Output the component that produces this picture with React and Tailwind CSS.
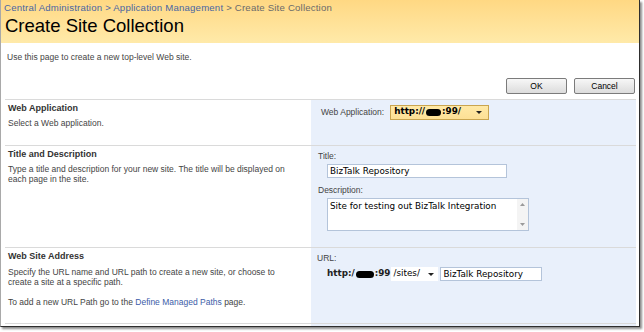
import React from "react";

const sans = "font-['Liberation_Sans',Arial,sans-serif]";
const verd = "font-['DejaVu_Sans',Verdana,sans-serif]";

// black blob that hides the server name
const Blob = ({ w }) => (
  <span className={`inline-block h-[7px] bg-black rounded-full align-middle mx-[1px] ${w}`} />
);

const Arrow = () => (
  <svg width="6" height="3" viewBox="0 0 6 3" className="shrink-0">
    <path d="M0 0h6L3 3z" fill="#222" />
  </svg>
);

const Input = ({ value, className }) => (
  <div
    className={`h-[14px] bg-white border border-[#b4c4da] flex items-center px-[2px] text-[8.8px] text-black leading-none ${verd} ${className}`}
  >
    {value}
  </div>
);

const Section = ({ title, children, right, className }) => (
  <div className={`flex border-t border-[#dadada] ${className}`}>
    <div className="w-[306px] shrink-0 pl-[3px] pr-[14px] pt-[3px]">
      <div className="text-[9px] leading-[11px] font-bold text-[#333]">{title}</div>
      {children}
    </div>
    <div className="flex-1 bg-[#e9f0fb] pt-[5px]">{right}</div>
  </div>
);

export default function App() {
  return (
    <div className={`w-[644px] h-[332px] bg-white overflow-hidden ${sans}`}>
      <div className="w-[640px] h-[327px] border-l border-l-[#a9a9a9] border-r border-r-[#2e2e2e] border-b border-b-[#2e2e2e] shadow-[2px_2px_2px_rgba(0,0,0,0.45)] flex flex-col overflow-hidden">
        {/* Header */}
        <div className="h-[43px] shrink-0 bg-gradient-to-b from-[#ffd883] to-[#ffeaa9] pl-[3px] pt-[2px]">
          <div className="text-[9.6px] leading-[11px] text-[#4a66a2] tracking-[0.2px]">
            Central Administration <span>&gt;</span> Application Management{" "}
            <span className="text-[#6a6a6a]">&gt; Create Site Collection</span>
          </div>
          <div className="text-[18.5px] leading-[20px] text-black mt-[3px] pl-[1px]">Create Site Collection</div>
        </div>

        {/* Intro + buttons */}
        <div className="pl-[6px] pt-[9px] text-[8.5px] leading-[10px] text-[#444]">
          Use this page to create a new top-level Web site.
        </div>
        <div className="flex justify-end gap-[7px] pr-[4px] mt-[16px] mb-[5px]">
          {["OK", "Cancel"].map((b) => (
            <div
              key={b}
              className="w-[61px] h-[16px] border border-[#7b7b7b] rounded-[2px] bg-gradient-to-b from-[#f7f7f7] to-[#dcdcdc] flex items-center justify-center text-[8.5px] text-black"
            >
              {b}
            </div>
          ))}
        </div>

        {/* Sections */}
        <div className="ml-[4px] mr-[3px] flex flex-col">
          <Section
            className="h-[46px]"
            title="Web Application"
            right={
              <div className="flex items-center pl-[10px] h-[14px]">
                <span className="text-[8.5px] text-[#444] mr-[6px]">Web Application:</span>
                <div className="w-[99px] h-[15px] border border-[#c9a550] bg-gradient-to-b from-[#ffe9a6] to-[#fde095] flex items-center pl-[3px] pr-[6px]">
                  <span className={`text-[8.8px] font-bold text-black flex items-center ${verd}`}>
                    http://<Blob w="w-[15px]" />:99/
                  </span>
                  <span className="flex-1" />
                  <Arrow />
                </div>
              </div>
            }
          >
            <div className="text-[8.5px] leading-[10px] text-[#444] mt-[4px]">Select a Web application.</div>
          </Section>

          <Section
            className="h-[102px]"
            title="Title and Description"
            right={
              <div className="pl-[7px]">
                <div className="text-[8.5px] leading-[10px] text-[#444]">Title:</div>
                <Input value="BizTalk Repository" className="w-[180px] ml-[9px] mt-[3px]" />
                <div className="text-[8.5px] leading-[10px] text-[#444] mt-[7px]">Description:</div>
                <div className="w-[202px] h-[33px] ml-[9px] mt-[3px] bg-white border border-[#b4c4da] flex">
                  <div className={`flex-1 text-[8.8px] leading-[11px] text-black pl-[2px] pt-[2px] ${verd}`}>
                    Site for testing out BizTalk Integration
                  </div>
                  <div className="w-[11px] bg-[#f4f4f4] flex flex-col justify-between items-center py-[4px]">
                    <svg width="5" height="3" viewBox="0 0 5 3"><path d="M0 3h5L2.5 0z" fill="#9a9a9a" /></svg>
                    <svg width="5" height="3" viewBox="0 0 5 3"><path d="M0 0h5L2.5 3z" fill="#9a9a9a" /></svg>
                  </div>
                </div>
              </div>
            }
          >
            <div className="text-[8.5px] leading-[9.5px] text-[#444] mt-[5px]">
              Type a title and description for your new site. The title will be displayed on each page in the site.
            </div>
          </Section>

          <Section
            className="h-[76px]"
            title="Web Site Address"
            right={
              <div className="pl-[6px]">
                <div className="text-[8.5px] leading-[10px] text-[#444]">URL:</div>
                <div className="flex items-center mt-[4px] ml-[10px] h-[14px]">
                  <span className={`text-[8.8px] font-bold text-[#222] flex items-center mr-[1px] ${verd}`}>
                    http:/<Blob w="w-[18px]" />:99
                  </span>
                  <div className={`w-[47px] h-[14px] bg-white flex items-center pl-[2px] pr-[4px] text-[8.8px] text-black ${verd}`}>
                    /sites/
                    <span className="flex-1" />
                    <Arrow />
                  </div>
                  <Input value="BizTalk Repository" className="w-[102px] ml-[2px]" />
                </div>
              </div>
            }
          >
            <div className="text-[8.5px] leading-[10px] text-[#444] mt-[5px]">
              Specify the URL name and URL path to create a new site, or choose to create a site at a specific path.
            </div>
            <div className="text-[8.5px] leading-[10px] text-[#444] mt-[10px]">
              To add a new URL Path go to the <span className="text-[#3b5ca8]">Define Managed Paths</span> page.
            </div>
          </Section>

          <Section className="h-[10px]" title="" right={null} />
        </div>
      </div>
    </div>
  );
}
